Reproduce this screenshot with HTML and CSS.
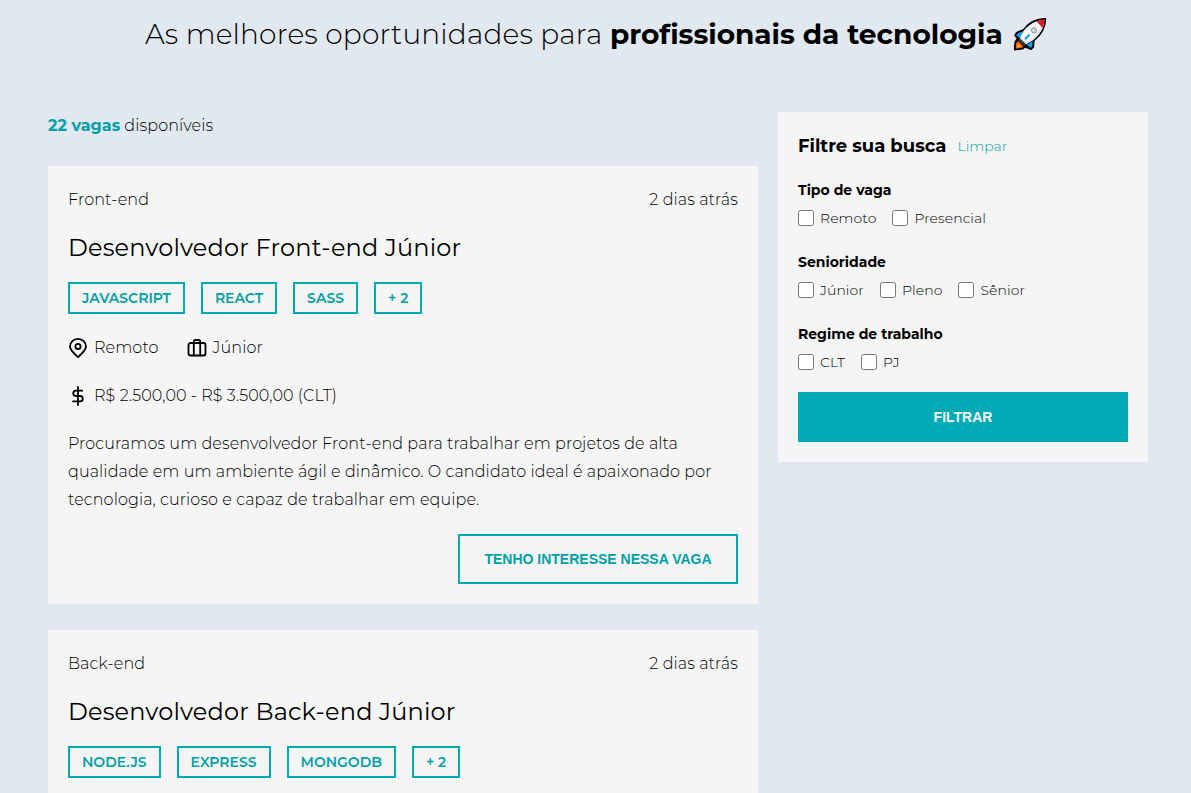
FILE: index.html
```html
<!DOCTYPE html>
<html lang="pt-BR">
<head>
<meta charset="utf-8">
<title>Vagas de tecnologia</title>
<link rel="stylesheet" href="styles.css">
</head>
<body>
<header class="hero">
  <h1 class="hero-title">As melhores oportunidades para <strong>profissionais da tecnologia</strong></h1>
  <svg class="rocket" viewBox="0 0 34 34">
    <path d="M10.500 12.500 3.500 15.500 1.800 18.500 4.200 21.500 2 25 1.500 32.800 9.500 32 12 30 18 32.500 20.500 30 21 23.500C27 19 32.500 11 32.700 1.500 23 1.500 15 6 10.500 12.500Z" fill="#000" stroke="#000" stroke-width="1.200" stroke-linejoin="round"/>
    <path d="M10 14 4.500 16.500 3.300 18.500 7 21ZM13.500 27.500 17.600 31 19.300 29.300 19.600 24.200Z" fill="#00a2ed"/>
    <path d="M6.800 21.500C10 11 20 3.500 31.400 2.800 31 14 22.800 23 12.700 27.200Z" fill="#f6f8fa"/>
    <path d="M12 26.500C20 21.500 28 12 31.400 2.800 31 14 22.800 23 12.700 27.200Z" fill="#dde3e8"/>
    <path d="M23.800 4.500Q27 3.100 31.400 2.800 31.200 7 29.600 11Z" fill="#e81224"/>
    <path d="M12 22.300 16.500 17.800" stroke="#00a2ed" stroke-width="2"/>
    <circle cx="21" cy="13.300" r="2.600" fill="#ccd3d8" stroke="#888" stroke-width=".9"/>
    <path d="M6.800 21.300 13.300 27.300 11.500 29 5.500 23.300Z" fill="#3d3d3d"/>
    <path d="M5 24 10.500 29.200 8.500 31 2.700 31.500 3.100 26.500Z" fill="#f7630c"/>
    <path d="M5.500 27 7.500 29 4.200 30.300Z" fill="#ffc83d"/>
  </svg>
</header>

<div class="page">
  <main class="jobs">
    <p><strong class="count">22 vagas</strong> disponíveis</p>

    <article class="card">
      <div class="card-top"><span>Front-end</span><span>2 dias atrás</span></div>
      <h2 class="card-title">Desenvolvedor Front-end Júnior</h2>
      <ul class="tags">
        <li class="tag">JAVASCRIPT</li>
        <li class="tag">REACT</li>
        <li class="tag">SASS</li>
        <li class="tag">+ 2</li>
      </ul>
      <div class="facts">
        <span class="fact">
          <svg class="icon" viewBox="0 0 20 20"><path d="M10 19.100C6.500 15.800 2 12.500 2 8.600a8 7.700 0 0 1 16 0C18 12.500 13.500 15.800 10 19.100Z"/><circle cx="10" cy="8.400" r="2.600"/></svg>
          <span>Remoto</span>
        </span>
        <span class="fact">
          <svg class="icon" viewBox="0 0 20 20"><rect x="1.500" y="5" width="17" height="12.500" rx="2"/><path d="M6.800 17.500V3.500Q6.800 2 8.300 2h3.400Q13.200 2 13.200 3.500v14"/></svg>
          <span>Júnior</span>
        </span>
      </div>
      <div class="fact">
        <svg class="icon" viewBox="0 0 20 20"><path d="M10 1v18M14.200 4.700H7.900a2.600 2.600 0 0 0 0 5.300h4.200a2.600 2.600 0 0 1 0 5.300H5"/></svg>
        <span>R$ 2.500,00 - R$ 3.500,00 (CLT)</span>
      </div>
      <p>Procuramos um desenvolvedor Front-end para trabalhar em projetos de alta qualidade em um ambiente ágil e dinâmico. O candidato ideal é apaixonado por tecnologia, curioso e capaz de trabalhar em equipe.</p>
      <button class="button button-outline" type="button">TENHO INTERESSE NESSA VAGA</button>
    </article>

    <article class="card card-last">
      <div class="card-top"><span>Back-end</span><span>2 dias atrás</span></div>
      <h2 class="card-title">Desenvolvedor Back-end Júnior</h2>
      <ul class="tags">
        <li class="tag">NODE.JS</li>
        <li class="tag">EXPRESS</li>
        <li class="tag">MONGODB</li>
        <li class="tag">+ 2</li>
      </ul>
    </article>
  </main>

  <aside class="filter">
    <div class="filter-head"><h3 class="filter-title">Filtre sua busca</h3><a class="clear">Limpar</a></div>
    <section>
      <h4 class="group-title">Tipo de vaga</h4>
      <div class="options">
        <label class="option"><input type="checkbox">Remoto</label>
        <label class="option"><input type="checkbox">Presencial</label>
      </div>
    </section>
    <section>
      <h4 class="group-title">Senioridade</h4>
      <div class="options">
        <label class="option"><input type="checkbox">Júnior</label>
        <label class="option"><input type="checkbox">Pleno</label>
        <label class="option"><input type="checkbox">Sênior</label>
      </div>
    </section>
    <section>
      <h4 class="group-title">Regime de trabalho</h4>
      <div class="options">
        <label class="option"><input type="checkbox">CLT</label>
        <label class="option"><input type="checkbox">PJ</label>
      </div>
    </section>
    <button class="button button-solid" type="button">FILTRAR</button>
  </aside>
</div>
</body>
</html>
```

FILE: styles.css
```css
* { margin: 0; padding: 0; box-sizing: border-box; }

body {
  background: #e1e8f0;
  color: #000;
  font-family: Montserrat, Inter, sans-serif;
  font-size: 16px;
  font-weight: 300;
  line-height: 28px;
  letter-spacing: .09px;
}

.hero { display: flex; align-items: center; height: 68px; padding-left: 145px; white-space: nowrap; }
.hero-title { width: 868px; font-size: 28px; font-weight: 300; line-height: 34px; letter-spacing: .18px; }
.hero-title strong { font-weight: 700; letter-spacing: -.03px; }
.rocket { width: 34px; height: 34px; }

.page { display: flex; align-items: flex-start; gap: 20px; padding: 44px 0 0 48px; }
.jobs { display: flex; flex-direction: column; gap: 26px; width: 710px; }
.count { color: #00a0a8; font-weight: 700; letter-spacing: 0; }

.card { display: flex; flex-direction: column; gap: 20px; padding: 20px; background: #f5f5f5; }
.card-last { padding-bottom: 15px; }
.card-top { display: flex; justify-content: space-between; }
.card-title { font-size: 24px; font-weight: 400; line-height: 28px; letter-spacing: .17px; }

.tags { display: flex; gap: 16px; list-style: none; }
.tag {
  height: 32px;
  padding: 0 12px;
  border: 2px solid #00aab4;
  color: #00a0a8;
  font-size: 14px;
  font-weight: 600;
  line-height: 28px;
  letter-spacing: 0;
}

.facts { display: flex; gap: 28px; }
.fact { display: flex; align-items: center; gap: 6px; }
.icon { width: 20px; height: 20px; fill: none; stroke: #000; stroke-width: 1.8; stroke-linecap: round; stroke-linejoin: round; }

.button { height: 50px; font: bold 14px "Liberation Sans", Arial, sans-serif; letter-spacing: 0; }
.button-outline { align-self: flex-end; width: 280px; border: 2px solid #00aab4; background: none; color: #00a0a8; }
.button-solid { border: 0; background: #00abb5; color: #f5f5f5; }

.filter { display: flex; flex-direction: column; gap: 16px; width: 370px; padding: 20px; background: #f5f5f5; font-size: 14px; }
.filter-head { display: flex; gap: 11px; }
.filter-title { font-size: 18px; font-weight: 700; letter-spacing: 0; }
.clear { color: #00a0a8; letter-spacing: 0; }
.group-title { font-size: 14px; font-weight: 700; letter-spacing: 0; }
.options { display: flex; gap: 16px; letter-spacing: .07px; }
.option { display: flex; align-items: center; gap: 6px; }
.option input {
  appearance: none;
  width: 16px;
  height: 16px;
  border: 1px solid #767676;
  border-radius: 2.5px;
  background: #fff;
}
```
